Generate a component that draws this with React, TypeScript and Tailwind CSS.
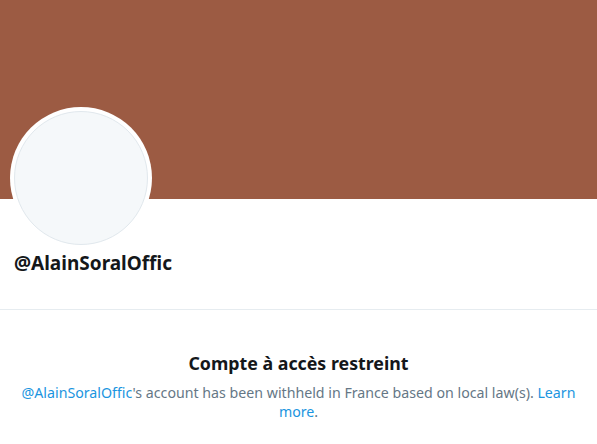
export default function App() {
  return (
    <div className="w-[597px] h-[444px] bg-white overflow-hidden" style={{ fontFamily: '"Noto Sans", "Open Sans", sans-serif' }}>
      <div className="h-[199px] bg-[#9c5b43]" />
      <div className="px-[10px]">
        <div className="-mt-[92px] w-[142px] h-[142px] rounded-full bg-white p-[4px]">
          <div className="w-full h-full rounded-full bg-[#f5f8fa] border border-[#e1e8ed]" />
        </div>
        <div className="mt-[1px] pl-[4px] text-[19px] font-bold text-[#14171a] leading-[26px]">@AlainSoralOffic</div>
      </div>
      <div className="mt-[33px] border-t border-[#e6ecf0]" />
      <div className="pt-[40px] px-[15px] text-center">
        <div className="text-[17.8px] font-bold text-[#14171a] leading-[26px]">Compte à accès restreint</div>
        <div className="mt-[7px] text-[14.2px] leading-[19px] text-[#657786]">
          <div>
            <span className="text-[#1b95e0]">@AlainSoralOffic</span>'s account has been withheld in France based on local law(s). <span className="text-[#1b95e0]">Learn</span>
          </div>
          <div>
            <span className="text-[#1b95e0]">more</span>.
          </div>
        </div>
      </div>
    </div>
  );
}
